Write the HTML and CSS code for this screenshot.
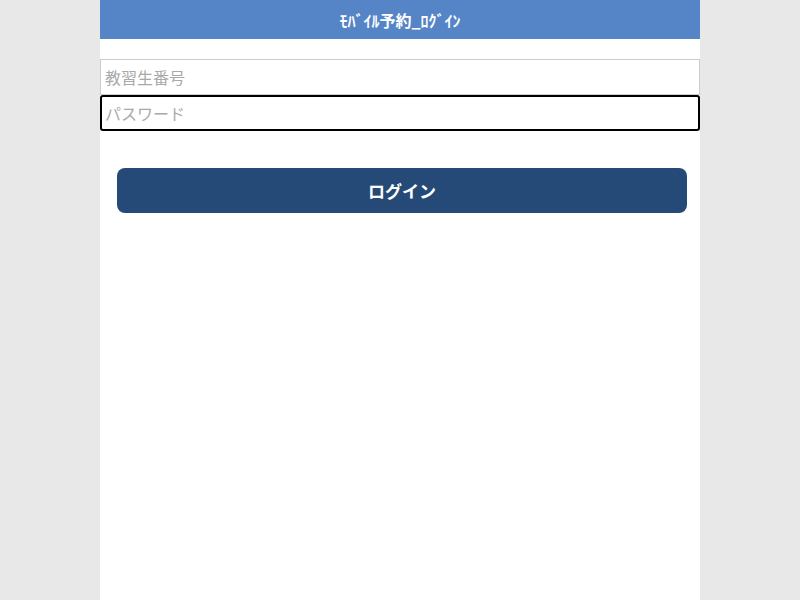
FILE: index.html
```html
<!DOCTYPE html>
<html lang="ja">
<head>
<meta charset="utf-8">
<title>ﾓﾊﾞｲﾙ予約_ﾛｸﾞｲﾝ</title>
<link rel="stylesheet" href="styles.css">
</head>
<body>
<div class="page">
  <header class="header">ﾓﾊﾞｲﾙ予約_ﾛｸﾞｲﾝ</header>
  <form class="form">
    <input class="field" type="text" placeholder="教習生番号">
    <input class="field field-focus" type="password" placeholder="パスワード">
    <div class="actions">
      <button class="btn" type="button">ログイン</button>
    </div>
  </form>
</div>
</body>
</html>
```
FILE: styles.css
```css
html, body {
  margin: 0;
  padding: 0;
  height: 100%;
  background: #e8e8e8;
  font-family: "Noto Sans CJK JP", "Noto Sans", sans-serif;
}
.page {
  width: 600px;
  margin: 0 auto;
  min-height: 100%;
  background: #ffffff;
}
.header {
  height: 39px;
  background: #5585c6;
  color: #ffffff;
  font-weight: bold;
  font-size: 16px;
  display: flex;
  align-items: center;
  justify-content: center;
}
.form {
  padding-top: 20px;
  display: flex;
  flex-direction: column;
}
.field {
  box-sizing: border-box;
  width: 100%;
  height: 36px;
  margin: 0;
  border: 1px solid #cccccc;
  padding: 0 4px;
  font-family: "Noto Sans CJK JP", sans-serif;
  font-size: 16px;
  color: #333;
  background: #fff;
  outline: none;
}
.field::placeholder {
  color: #a9a9a9;
}
.field-focus {
  border: 2px solid #000000;
  border-radius: 3px;
  padding: 0 3px;
}
.actions {
  padding: 37px 13px 0 17px;
}
.btn {
  width: 100%;
  height: 45px;
  border: none;
  border-radius: 8px;
  background: #264a78;
  color: #ffffff;
  font-family: "Noto Sans CJK JP", sans-serif;
  font-weight: bold;
  font-size: 17px;
  cursor: pointer;
}
```
